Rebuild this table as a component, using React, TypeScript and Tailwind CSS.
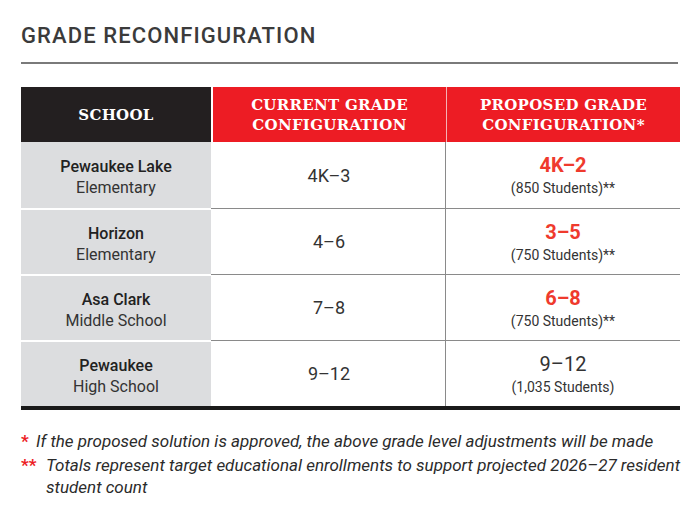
import React from "react";

const rows = [
  { top: "Pewaukee Lake", bottom: "Elementary", current: "4K–3", proposed: "4K–2", students: "(850 Students)**", red: true },
  { top: "Horizon", bottom: "Elementary", current: "4–6", proposed: "3–5", students: "(750 Students)**", red: true },
  { top: "Asa Clark", bottom: "Middle School", current: "7–8", proposed: "6–8", students: "(750 Students)**", red: true },
  { top: "Pewaukee", bottom: "High School", current: "9–12", proposed: "9–12", students: "(1,035 Students)", red: false },
];

export default function App() {
  return (
    <div className="w-[700px] h-[508px] bg-white pt-[24px] pl-[21px] pr-[14px] text-[#2b2b2b] font-['Roboto',sans-serif]">
      {/* Title */}
      <h1 className="text-[22px] leading-[24px] font-medium tracking-[0.05em] text-[#3b3b3b]">
        GRADE RECONFIGURATION
      </h1>
      <div className="mt-[14px] w-[657px] h-[2px] bg-[#7a7a7a]" />

      {/* Table */}
      <div className="mt-[23px] w-[659px]">
        <div className="flex h-[55px] font-['DejaVu_Serif',serif] font-bold text-white text-[15px] leading-[20px] tracking-[0.02em]">
          <div className="w-[190px] bg-[#231f20] flex items-center justify-center">SCHOOL</div>
          <div className="w-[2px] bg-white" />
          <div className="w-[233px] bg-[#ed1c24] flex items-center justify-center text-center">
            CURRENT GRADE<br />CONFIGURATION
          </div>
          <div className="w-[1px] bg-[#f4b3b5]" />
          <div className="flex-1 bg-[#ed1c24] flex items-center justify-center text-center">
            PROPOSED GRADE<br />CONFIGURATION*
          </div>
        </div>

        {rows.map((r, i) => (
          <div key={r.top + i} className={`flex h-[66px] ${i > 0 ? "border-t border-[#8a8a8a]" : ""}`}>
            <div className={`w-[190px] bg-[#dcdddf] flex flex-col items-center justify-center pt-[3px] text-[16px] leading-[21px] ${i > 0 ? "border-t-2 border-white -mt-px" : ""}`}>
              <span className="font-medium text-[#222]">{r.top}</span>
              <span className="text-[#333]">{r.bottom}</span>
            </div>
            <div className="w-[2px] bg-white" />
            <div className="w-[233px] flex items-center justify-center text-[18px] text-[#333] border-r border-[#8a8a8a]">
              {r.current}
            </div>
            <div className="flex-1 flex flex-col items-center justify-center pt-[2px]">
              {r.red ? (
                <span className="text-[20px] leading-[22px] font-bold text-[#ef3a2d]">{r.proposed}</span>
              ) : (
                <span className="text-[20px] leading-[22px] text-[#333]">{r.proposed}</span>
              )}
              <span className="text-[14px] leading-[20px] text-[#333] mt-[2px]">{r.students}</span>
            </div>
          </div>
        ))}
        <div className="h-[4px] bg-[#1a1a1a]" />
      </div>

      {/* Footnotes */}
      <div className="mt-[20px] italic text-[17px] leading-[22px] text-[#2b2b2b]">
        <div className="flex">
          <span className="not-italic font-bold text-[#ed1c24] w-[15px] shrink-0">*</span>
          <span>If the proposed solution is approved, the above grade level adjustments will be made</span>
        </div>
        <div className="flex mt-[2px]">
          <span className="not-italic font-bold text-[#ed1c24] w-[25px] shrink-0">**</span>
          <span>Totals represent target educational enrollments to support projected 2026–27 resident student count</span>
        </div>
      </div>
    </div>
  );
}
